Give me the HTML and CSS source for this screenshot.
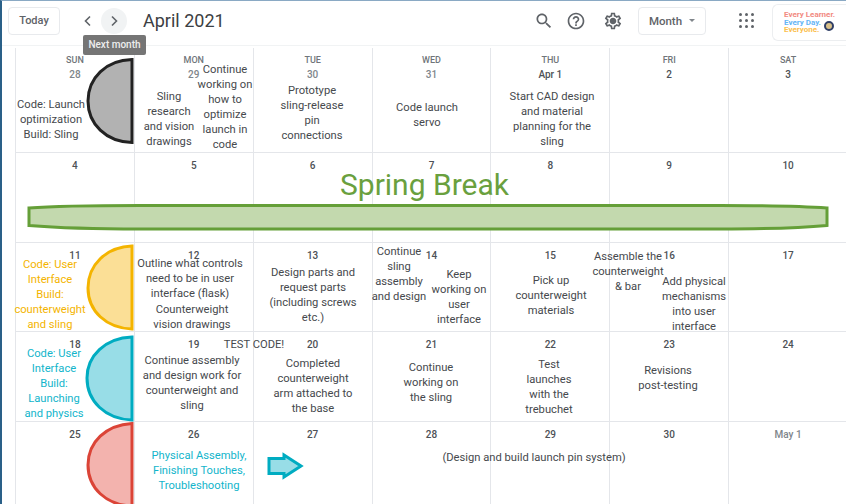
FILE: index.html
```html
<!DOCTYPE html>
<html lang="en">
<head>
  <meta charset="UTF-8" />
  <title>April 2021</title>
  <link rel="stylesheet" href="styles.css">
</head>
<body>
  <!-- Top bar -->
  <header id="topbar">
    <button class="btn today">Today</button>
    <div class="nav">
      <span class="chev">
        <svg width="16" height="16" viewBox="0 0 16 16"><path d="M10 3.5 5.5 8l4.500 4.500" /></svg>
      </span>
      <span class="chev hover">
        <svg width="16" height="16" viewBox="0 0 16 16"><path d="M6 3.500 10.500 8 6 12.500" /></svg>
      </span>
      <div class="tooltip">Next month</div>
    </div>
    <h1>April 2021</h1>
    <div class="spacer"></div>
    <svg class="icon search" viewBox="0 0 24 24"><path d="M15.500 14h-.79l-.28-.27C15.410 12.590 16 11.110 16 9.500 16 5.910 13.090 3 9.500 3S3 5.910 3 9.500 5.910 16 9.500 16c1.610 0 3.090-.59 4.230-1.570l.27.28v.79l5 4.990L20.490 19l-4.990-5zm-6 0C7.010 14 5 11.990 5 9.500S7.010 5 9.500 5 14 7.010 14 9.500 11.990 14 9.500 14z" /></svg>
    <svg class="icon help" viewBox="0 0 24 24"><path d="M11 18h2v-2h-2v2zm1-16C6.480 2 2 6.480 2 12s4.480 10 10 10 10-4.480 10-10S17.520 2 12 2zm0 18c-4.410 0-8-3.590-8-8s3.590-8 8-8 8 3.590 8 8-3.590 8-8 8zm0-14c-2.210 0-4 1.790-4 4h2c0-1.100.9-2 2-2s2 .9 2 2c0 2-3 1.750-3 5h2c0-2.250 3-2.500 3-5 0-2.210-1.790-4-4-4z" /></svg>
    <svg class="icon gear" viewBox="0 0 24 24"><path d="M19.430 12.980c.04-.32.07-.64.07-.98 0-.34-.03-.66-.07-.98l2.110-1.650c.19-.15.24-.42.12-.64l-2-3.460c-.09-.16-.26-.25-.44-.25-.06 0-.12.01-.17.03l-2.490 1c-.52-.4-1.080-.73-1.690-.98l-.38-2.650C14.460 2.180 14.250 2 14 2h-4c-.25 0-.46.18-.49.42l-.38 2.650c-.61.25-1.170.59-1.690.98l-2.490-1c-.06-.02-.12-.03-.18-.03-.17 0-.34.09-.43.25l-2 3.460c-.13.22-.07.49.12.64l2.110 1.650c-.04.32-.07.65-.07.98 0 .33.03.66.07.98l-2.110 1.650c-.19.15-.24.42-.12.64l2 3.460c.09.16.26.25.44.25.06 0 .12-.01.17-.03l2.490-1c.52.4 1.080.73 1.690.98l.38 2.650c.03.24.24.42.49.42h4c.25 0 .46-.18.49-.42l.38-2.650c.61-.25 1.170-.59 1.690-.98l2.490 1c.06.02.12.03.18.03.17 0 .34-.09.43-.25l2-3.460c.12-.22.07-.49-.12-.64l-2.110-1.650zm-1.980-1.710c.04.31.05.52.05.73 0 .21-.02.43-.05.73l-.14 1.130.89.7 1.080.84-.7 1.210-1.270-.51-1.040-.42-.9.68c-.43.32-.84.56-1.250.73l-1.060.43-.16 1.130-.2 1.350h-1.400l-.19-1.350-.16-1.130-1.060-.43c-.43-.18-.83-.41-1.230-.71l-.91-.7-1.060.43-1.270.51-.7-1.210 1.080-.84.89-.7-.14-1.130c-.03-.31-.05-.54-.05-.74s.02-.43.05-.73l.14-1.130-.89-.7-1.080-.84.7-1.210 1.270.51 1.040.42.9-.68c.43-.32.84-.56 1.250-.73l1.060-.43.16-1.130.2-1.350h1.390l.19 1.350.16 1.130 1.060.43c.43.18.83.41 1.230.71l.91.7 1.060-.43 1.270-.51.7 1.210-1.070.85-.89.7.14 1.130zM12 8c-2.210 0-4 1.790-4 4s1.790 4 4 4 4-1.790 4-4-1.790-4-4-4z" /></svg>
    <button class="btn month">Month<span class="caret"></span></button>
    <div class="apps">
      <i></i><i></i><i></i><i></i><i></i><i></i><i></i><i></i><i></i>
    </div>
    <div class="logo">
      <span class="l1">Every Learner.</span>
      <span class="l2">Every Day.</span>
      <span class="l3">Everyone.</span>
      <span class="seal"></span>
    </div>
  </header>

  <!-- Month grid -->
  <main id="month">
    <div class="cell"><span class="dow">SUN</span><span class="day past">28</span></div>
    <div class="cell"><span class="dow">MON</span><span class="day past">29</span></div>
    <div class="cell"><span class="dow">TUE</span><span class="day past">30</span></div>
    <div class="cell"><span class="dow">WED</span><span class="day past">31</span></div>
    <div class="cell"><span class="dow">THU</span><span class="day">Apr 1</span></div>
    <div class="cell"><span class="dow">FRI</span><span class="day">2</span></div>
    <div class="cell"><span class="dow">SAT</span><span class="day">3</span></div>

    <div class="cell"><span class="day">4</span></div>
    <div class="cell"><span class="day">5</span></div>
    <div class="cell"><span class="day">6</span></div>
    <div class="cell"><span class="day">7</span></div>
    <div class="cell"><span class="day">8</span></div>
    <div class="cell"><span class="day">9</span></div>
    <div class="cell"><span class="day">10</span></div>

    <div class="cell"><span class="day">11</span></div>
    <div class="cell"><span class="day">12</span></div>
    <div class="cell"><span class="day">13</span></div>
    <div class="cell"><span class="day">14</span></div>
    <div class="cell"><span class="day">15</span></div>
    <div class="cell"><span class="day">16</span></div>
    <div class="cell"><span class="day">17</span></div>

    <div class="cell"><span class="day">18</span></div>
    <div class="cell"><span class="day">19</span></div>
    <div class="cell"><span class="day">20</span></div>
    <div class="cell"><span class="day">21</span></div>
    <div class="cell"><span class="day">22</span></div>
    <div class="cell"><span class="day">23</span></div>
    <div class="cell"><span class="day">24</span></div>

    <div class="cell"><span class="day">25</span></div>
    <div class="cell"><span class="day">26</span></div>
    <div class="cell"><span class="day">27</span></div>
    <div class="cell"><span class="day">28</span></div>
    <div class="cell"><span class="day">29</span></div>
    <div class="cell"><span class="day">30</span></div>
    <div class="cell"><span class="day past">May 1</span></div>
  </main>

  <!-- Shapes drawn over the calendar -->
  <svg id="shapes" width="846" height="504" viewBox="0 0 846 504">
    <path class="gray" d="M132 59.500C106 60 88 78 88 101C88 124 106 142 132 142.500Z" />
    <path class="yellow" d="M132 246C106 247 88 265 88 288C88 311 106 328 132 329Z" />
    <path class="cyan" d="M132 337C105 338 87 356 87 378C87 401 105 419 132 420Z" />
    <path class="red" d="M132 423.500C106 425 88 442 88 465C88 488 106 505 132 506Z" />
    <path class="green" d="M29 208C60 205.500 100 205.500 140 205.500L720 205.500C770 205.500 800 206 827 208L827 225.500C800 228 770 229 720 229L140 229C100 229 60 228 29 225.500Z" />
    <path class="cyan arrow" d="M269 458.500H284V455L301 466L284 477V473.500H269Z" />
  </svg>

  <!-- Notes typed onto the calendar -->
  <div class="break">Spring Break</div>

  <div class="note n-launch">Code: Launch<br>optimization<br>Build: Sling</div>
  <div class="note n-research">Sling<br>research<br>and vision<br>drawings</div>
  <div class="note n-optimize">Continue<br>working on<br>how to<br>optimize<br>launch in<br>code</div>
  <div class="note n-proto">Prototype<br>sling-release<br>pin<br>connections</div>
  <div class="note n-servo">Code launch<br>servo</div>
  <div class="note n-cad">Start CAD design<br>and material<br>planning for the<br>sling</div>

  <div class="note amber n-ui">Code: User<br>Interface<br>Build:<br>counterweight<br>and sling</div>
  <div class="note n-outline">Outline what controls<br>need to be in user<br>interface (flask)</div>
  <div class="note n-vision">Counterweight<br>vision drawings</div>
  <div class="note n-parts">Design parts and<br>request parts<br>(including screws<br>etc.)</div>
  <div class="note n-assembly">Continue<br>sling<br>assembly<br>and design</div>
  <div class="note n-keep">Keep<br>working on<br>user<br>interface</div>
  <div class="note n-pick">Pick up<br>counterweight<br>materials</div>
  <div class="note n-bar">Assemble the<br>counterweight<br>&amp; bar</div>
  <div class="note n-mech">Add physical<br>mechanisms<br>into user<br>interface</div>

  <div class="note teal n-physics">Code: User<br>Interface<br>Build:<br>Launching<br>and physics</div>
  <div class="note n-work">Continue assembly<br>and design work for<br>counterweight and<br>sling</div>
  <div class="note n-test">TEST CODE!</div>
  <div class="note n-arm">Completed<br>counterweight<br>arm attached to<br>the base</div>
  <div class="note n-sling">Continue<br>working on<br>the sling</div>
  <div class="note n-trebuchet">Test<br>launches<br>with the<br>trebuchet</div>
  <div class="note n-revisions">Revisions<br>post-testing</div>

  <div class="note teal n-final">Physical Assembly,<br>Finishing Touches,<br>Troubleshooting</div>
  <div class="note n-pin">(Design and build launch pin system)</div>
</body>
</html>
```

FILE: styles.css
```css
/* === PAGE === */
html, body {
  height: 100%;
}

body {
  margin: 0;
  position: relative;
  height: 504px;
  overflow: hidden;
  box-sizing: border-box;
  border-top: 1px solid #8aa9c4;
  border-left: 2px solid #2a6088;
  background: #fff;
  font-family: Roboto, sans-serif;
  color: #3c4043;
}

/* === TOP BAR === */
#topbar {
  display: flex;
  align-items: center;
  height: 45px;
  padding-left: 6px;
  padding-bottom: 5px;
  box-sizing: border-box;
  border-bottom: 1px solid #f1f3f4;
}

.btn {
  height: 28px;
  box-sizing: border-box;
  background: #fff;
  border: 1px solid #e8eaed;
  border-radius: 4px;
  font-family: Roboto, sans-serif;
  font-weight: 500;
  font-size: 11px;
  color: #5f6368;
  padding: 0;
}

.today {
  width: 52px;
}

.nav {
  position: relative;
  display: flex;
  margin-left: 15px;
}

.chev {
  width: 26px;
  height: 26px;
  border-radius: 50%;
  display: flex;
  align-items: center;
  justify-content: center;
}

.chev path {
  fill: none;
  stroke: #5f6368;
  stroke-width: 1.6;
}

.chev.hover {
  background: #f1f3f4;
}

.tooltip {
  position: absolute;
  top: 27px;
  left: 8px;
  width: 63px;
  height: 20px;
  background: #757575;
  color: #eee;
  border-radius: 2px;
  font-size: 10px;
  font-weight: 500;
  line-height: 20px;
  text-align: center;
  z-index: 5;
}

h1 {
  margin: 0 0 0 16px;
  font-size: 18px;
  font-weight: 400;
  color: #3c4043;
}

.spacer {
  flex: 1;
}

.icon {
  width: 20px;
  height: 20px;
  fill: #5f6368;
}

.search {
  margin-right: 12px;
}

.help {
  margin-right: 17px;
}

.month {
  width: 68px;
  margin-left: 15px;
  font-size: 11.500px;
  display: flex;
  align-items: center;
  justify-content: center;
  gap: 7px;
}

.caret {
  width: 0;
  height: 0;
  border-left: 3px solid transparent;
  border-right: 3px solid transparent;
  border-top: 3px solid #80868b;
}

.apps {
  display: grid;
  grid-template-columns: repeat(3, 3px);
  gap: 3px;
  margin-left: 33px;
  margin-right: 18px;
}

.apps i {
  width: 3px;
  height: 3px;
  border-radius: 50%;
  background: #5f6368;
}

.logo {
  position: relative;
  width: 75px;
  height: 37px;
  margin-right: -1px;
  margin-top: 4px;
  box-sizing: border-box;
  border: 1px solid #eceef0;
  border-right: 0;
  border-radius: 6px 0 0 6px;
  padding: 6px 0 0 11px;
  font-size: 8px;
  font-weight: 700;
  line-height: 7.500px;
  display: flex;
  flex-direction: column;
  white-space: nowrap;
}

.l1 { color: #f28b82; }
.l2 { color: #64b5f6; }
.l3 { color: #fbc04e; }

.seal {
  position: absolute;
  left: 51px;
  top: 16px;
  width: 6px;
  height: 6px;
  border: 2.500px solid #2f3e66;
  border-radius: 50%;
  background: #d8c08a;
}

/* === MONTH GRID === */
#month {
  display: grid;
  grid-template-columns: repeat(7, 1fr);
  grid-template-rows: 105px 90px 89px 90px 90px;
  margin-left: 13px;
  margin-top: 2px;
  width: 832px;
  border-left: 1px solid #e4e6ea;
}

.cell {
  display: flex;
  flex-direction: column;
  align-items: center;
  border-right: 1px solid #e4e6ea;
  border-bottom: 1px solid #e4e6ea;
  padding-top: 7px;
  min-width: 0;
}

.dow {
  font-size: 9px;
  font-weight: 500;
  color: #70757a;
  line-height: 12px;
  margin-top: -1px;
  margin-bottom: 3px;
}

.day {
  font-size: 10px;
  font-weight: 500;
  line-height: 12px;
  color: #4d5156;
}

.day.past {
  color: #80868b;
}

/* === DRAWN SHAPES === */
#shapes {
  position: absolute;
  top: -1px;
  left: -2px;
}

#shapes path {
  stroke-width: 3;
}

.gray { fill: #b2b2b2; stroke: #222; }
.yellow { fill: #fbdf96; stroke: #f4b400; }
.cyan { fill: #98dde7; stroke: #00acc1; }
.red { fill: #f3b3ae; stroke: #db4437; }
.green { fill: #c3d9ae; stroke: #659f38; }

.break {
  position: absolute;
  left: 338px;
  top: 167px;
  font-size: 30px;
  line-height: 34px;
  color: #6aa03e;
  white-space: nowrap;
}

/* === NOTES === */
.note {
  position: absolute;
  transform: translateX(-50%);
  font-size: 11.200px;
  line-height: 15px;
  text-align: center;
  white-space: nowrap;
  color: #46494d;
}

.note.amber { color: #f4b400; }
.note.teal { color: #12b5cb; }

.n-launch { left: 49px; top: 96px; }
.n-research { left: 167px; top: 88px; }
.n-optimize { left: 223px; top: 61px; }
.n-proto { left: 310px; top: 82px; }
.n-servo { left: 425px; top: 99px; }
.n-cad { left: 550px; top: 88px; }

.n-ui { left: 48px; top: 256px; }
.n-outline { left: 188px; top: 255px; }
.n-vision { left: 190px; top: 301px; }
.n-parts { left: 311px; top: 264px; }
.n-assembly { left: 397px; top: 243px; }
.n-keep { left: 457px; top: 266px; }
.n-pick { left: 549px; top: 272px; }
.n-bar { left: 626px; top: 248px; }
.n-mech { left: 692px; top: 273px; }

.n-physics { left: 52px; top: 345px; }
.n-work { left: 190px; top: 352px; }
.n-test { left: 252px; top: 336px; }
.n-arm { left: 311px; top: 355px; }
.n-sling { left: 429px; top: 359px; }
.n-trebuchet { left: 547px; top: 356px; }
.n-revisions { left: 666px; top: 362px; }

.n-final { left: 197px; top: 447px; }
.n-pin { left: 532px; top: 449px; }
```
